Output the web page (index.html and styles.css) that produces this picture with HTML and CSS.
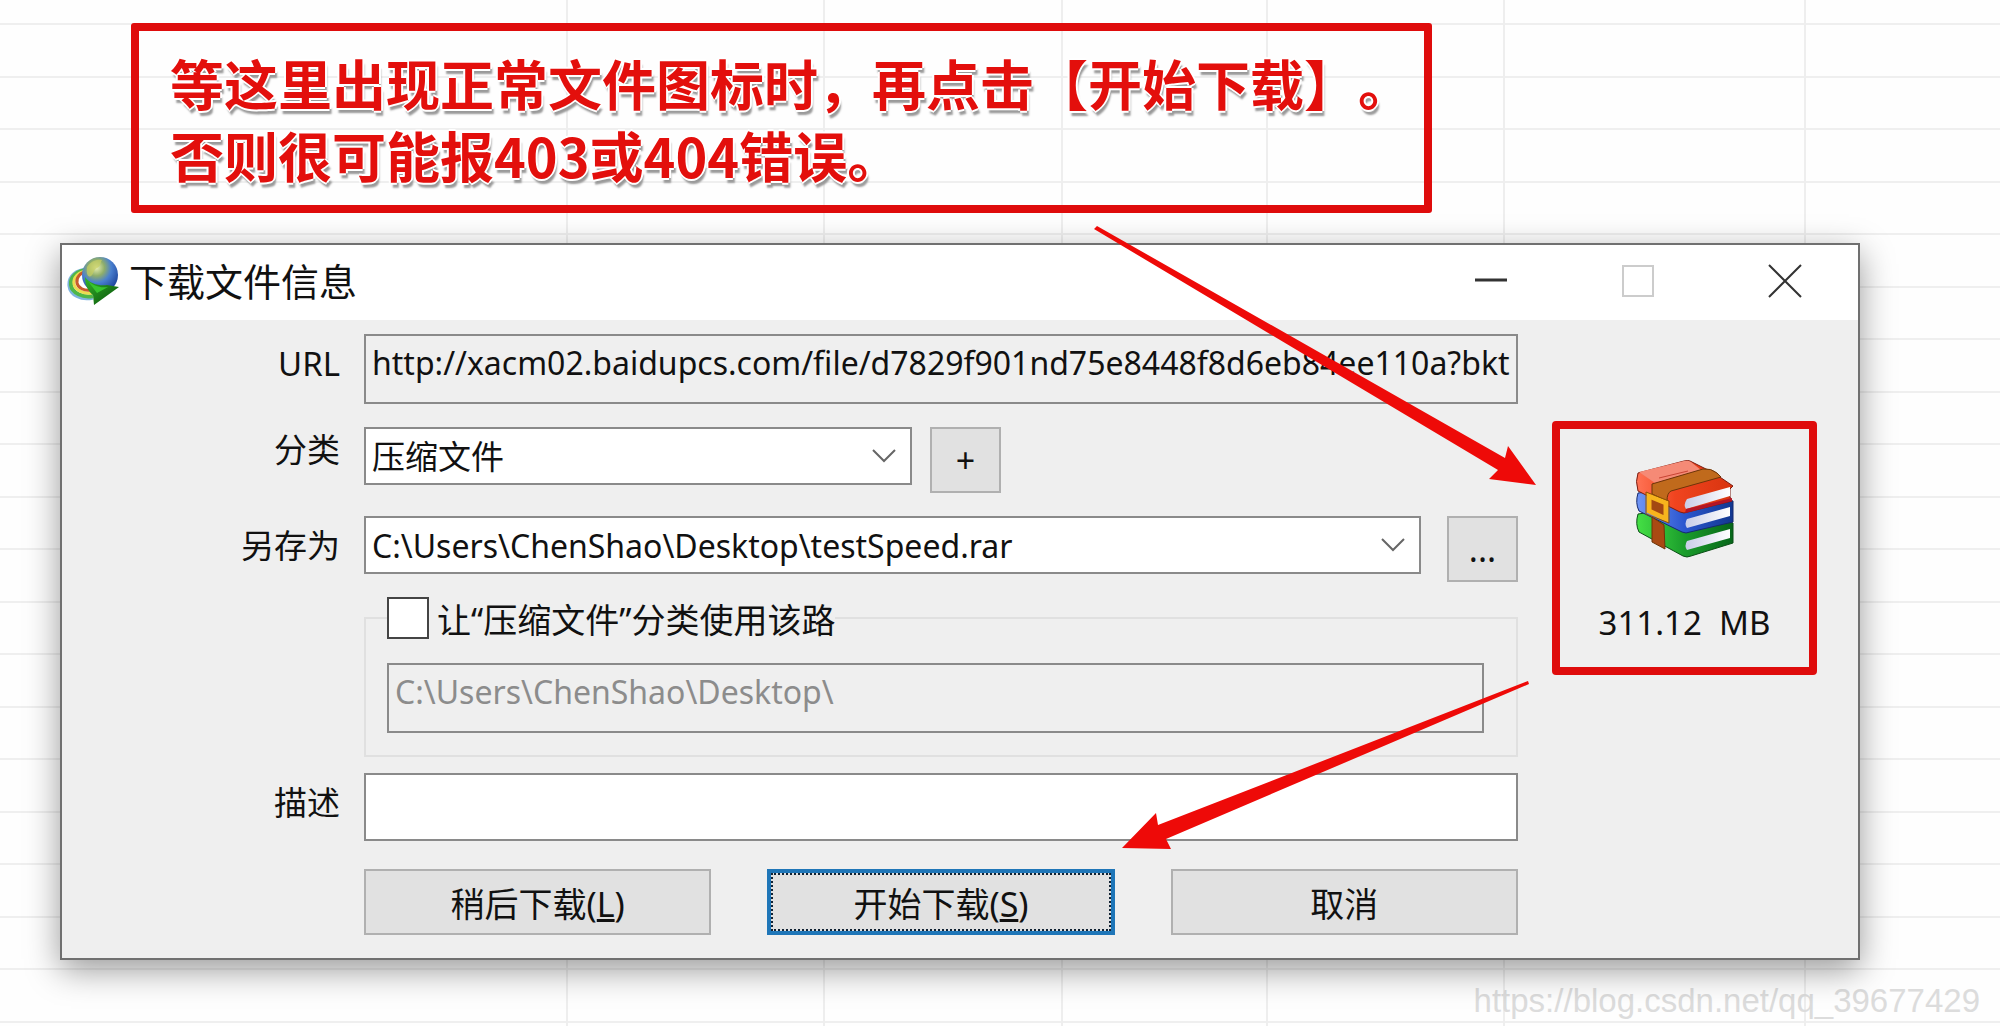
FILE: index.html
```
<!DOCTYPE html>
<html lang="zh-CN">
<head>
  <meta charset="utf-8">
  <title>下载文件信息</title>
  <link rel="stylesheet" href="styles.css">
</head>
<body>
  <p class="note">等这里出现正常文件图标时，再点击【开始下载】。<br>否则很可能报403或404错误。</p>

  <div class="dialog">
    <div class="titlebar">
      <svg class="logo" viewBox="0 0 52 48">
        <defs>
          <radialGradient id="globe" cx="0.4" cy="0.3" r="0.75">
            <stop offset="0" stop-color="#e9efb0"/>
            <stop offset="0.3" stop-color="#8fae6a"/>
            <stop offset="0.55" stop-color="#4a80cf"/>
            <stop offset="1" stop-color="#173c94"/>
          </radialGradient>
          <linearGradient id="arrow" x1="0" y1="0" x2="1" y2="1">
            <stop offset="0" stop-color="#35b52c"/>
            <stop offset="1" stop-color="#064d08"/>
          </linearGradient>
        </defs>
        <g fill="none">
          <path d="M22 12C8 12 1 20 2 29c1 9 12 15 24 12" stroke="#7fb4e0" stroke-width="3"/>
          <path d="M22 13C10 13 3 20 4 28c1 8 12 13 22 11" stroke="#4fb648" stroke-width="4"/>
          <path d="M21 14C11 14 6 21 7 27c1 6 9 10 18 9" stroke="#e9dc50" stroke-width="3"/>
          <path d="M20 15C13 15 9 21 10 26c1 5 7 8 14 7" stroke="#c65a2c" stroke-width="3"/>
        </g>
        <circle cx="33" cy="18" r="18" fill="url(#globe)"/>
        <path d="M20 10c4-6 10-8 15-7-2 3-1 6-5 8s-3 6-6 8-5-2-4-9z" fill="#c6cf62" opacity="0.7"/>
        <path d="M18 20c5 7 14 9 22 8l12 2-25 18-1-10c-5-4-8-10-8-18z" fill="url(#arrow)"/>
        <path d="M20 23c6 6 13 8 21 7l-11 6z" fill="#38c52f"/>
      </svg>
      <span class="title">下载文件信息</span>
      <div class="window-buttons">
        <button type="button" aria-label="最小化"><svg viewBox="0 0 34 34"><path d="M1 16h32" stroke="#333" stroke-width="3"/></svg></button>
        <button type="button" aria-label="最大化" disabled><svg viewBox="0 0 34 34"><path d="M2 2h30v30H2z" fill="none" stroke="#ccc" stroke-width="2"/></svg></button>
        <button type="button" aria-label="关闭"><svg viewBox="0 0 34 34"><path d="M1 1l32 32M33 1L1 33" stroke="#333" stroke-width="2"/></svg></button>
      </div>
    </div>

    <div class="content">
      <form class="form">
        <label for="url">URL</label>
        <input id="url" class="text" type="text" value="http://xacm02.baidupcs.com/file/d7829f901nd75e8448f8d6eb84ee110a?bkt" readonly>

        <label class="label-top" for="category">分类</label>
        <div class="row">
          <div class="combo combo-short">
            <select id="category"><option>压缩文件</option></select>
            <svg viewBox="0 0 24 14"><path d="M1 1l11 11L23 1"/></svg>
          </div>
          <button class="btn btn-small" type="button">+</button>
        </div>

        <label class="label-path" for="path">另存为</label>
        <div class="row row-wide">
          <div class="combo">
            <select id="path"><option>C:\Users\ChenShao\Desktop\testSpeed.rar</option></select>
            <svg viewBox="0 0 24 14"><path d="M1 1l11 11L23 1"/></svg>
          </div>
          <button class="btn btn-small" type="button">...</button>
        </div>

        <fieldset class="group">
          <legend><input id="remember" type="checkbox"><label for="remember">让“压缩文件”分类使用该路</label></legend>
          <input class="text" type="text" value="C:\Users\ChenShao\Desktop\" aria-label="默认路径" disabled>
        </fieldset>

        <label for="desc">描述</label>
        <input id="desc" class="text editable" type="text">

        <div class="actions">
          <button class="btn" type="button">稍后下载(<u>L</u>)</button>
          <button class="btn btn-default" type="button">开始下载(<u>S</u>)</button>
          <button class="btn" type="button">取消</button>
        </div>
      </form>

      <div class="side">
        <div class="file">
          <svg class="rar" viewBox="0 0 100 100">
            <defs>
              <linearGradient id="red" x1="0" x2="1"><stop offset="0" stop-color="#ff7355"/><stop offset="0.4" stop-color="#f0441f"/><stop offset="1" stop-color="#d8340f"/></linearGradient>
              <linearGradient id="blue" x1="0" x2="1"><stop offset="0" stop-color="#6f95f5"/><stop offset="0.5" stop-color="#2b56cf"/><stop offset="1" stop-color="#12378f"/></linearGradient>
              <linearGradient id="green" x1="0" x2="1"><stop offset="0" stop-color="#45e045"/><stop offset="0.5" stop-color="#1a9c2b"/><stop offset="1" stop-color="#07661a"/></linearGradient>
              <linearGradient id="pages" x1="0" x2="1"><stop offset="0" stop-color="#c9cde8"/><stop offset="1" stop-color="#fff"/></linearGradient>
            </defs>
            <!-- green book -->
            <path d="M3 55q-3 10 1 18l44 24q4 2 8 0l42-13v-20L40 50z" fill="url(#green)" stroke="#0b4f16" stroke-width="1"/>
            <path d="M52 82q-3 5 0 9l43-12V70z" fill="url(#pages)"/>
            <!-- blue book -->
            <path d="M3 34q-3 10 1 18l43 21q4 2 8 0l43-10V42L40 30z" fill="url(#blue)" stroke="#15296e" stroke-width="1"/>
            <path d="M52 60q-3 5 0 9l43-12V48z" fill="url(#pages)"/>
            <!-- red book -->
            <path d="M3 14Q0 22 3 32l42 21q4 2 8 0l44-11-2-4V30l3-3-19-13L55 2q-2-1-6 0z" fill="url(#red)" stroke="#7a1d12" stroke-width="1"/>
            <path d="M4 13L49 2q4-1 7 1l10 8-46 13z" fill="#f58a76"/>
            <path d="M24 19l29-7" stroke="#c84434" stroke-width="1"/>
            <path d="M52 40q-4 6-1 10l44-13V28z" fill="url(#pages)"/>
            <path d="M51 50l46-11v3L50 54z" fill="#b31527"/>
            <!-- belt -->
            <path d="M17 25L68 10q8-1 14 4l4 4-50 14q-4 2-4 10l-15-7z" fill="#c06a1c" stroke="#6d3509" stroke-width="1"/>
            <path d="M17 58l12 8 1 24-13-7z" fill="#a94a13" stroke="#6d3509" stroke-width="1"/>
            <path d="M14 37l17 7v16l-17-8z" fill="#a44812" stroke="#f7b51d" stroke-width="5"/>
            <path d="M11 33l23 9v22l-23-9z" fill="none" stroke="#8c5207" stroke-width="1"/>
          </svg>
          <span class="size">311.12  MB</span>
        </div>
      </div>
    </div>

    <svg class="arrows" viewBox="0 0 446 640" aria-hidden="true">
      <path d="M3 5L411 237 414 225 442 264 395 258 404 249 0 8z"/>
      <path d="M434 460L64 604 62 592 28 627 77 628 72 618 435 463z"/>
    </svg>
  </div>

  <footer class="watermark">https://blog.csdn.net/qq_39677429</footer>
</body>
</html>
```
FILE: styles.css
```
* {
  box-sizing: border-box;
}

body {
  margin: 0;
  padding-top: 23px;
  font-family: "Noto Sans", "Noto Sans CJK SC", sans-serif;
  font-size: 33px;
  color: #111;
  background-color: #fefefe;
  /* spreadsheet lines behind the dialog */
  background-image:
    linear-gradient(#eee, #eee),
    linear-gradient(#eee, #eee),
    linear-gradient(#eee, #eee),
    linear-gradient(#eee, #eee),
    linear-gradient(#eee, #eee),
    linear-gradient(#eee, #eee),
    repeating-linear-gradient(transparent 0 23px, #efefef 23px 25px, transparent 25px 76px, #efefef 76px 78px, transparent 78px 105px);
  background-size: 2px 100%, 2px 100%, 2px 100%, 2px 100%, 2px 100%, 2px 100%, 100% 100%;
  background-position: 566px 0, 823px 0, 1061px 0, 1266px 0, 1503px 0, 1804px 0, 0 0;
  background-repeat: no-repeat;
  min-height: 100vh;
  overflow: hidden;
}

button,
input,
select {
  font: inherit;
  color: inherit;
  margin: 0;
}

.note {
  margin: 0 568px 0 131px;
  padding: 16px 0 14px 31px;
  border: 8px solid #df0c0c;
  border-radius: 3px;
  font-family: "Noto Sans CJK SC", sans-serif;
  font-size: 54px;
  font-weight: bold;
  line-height: 72px;
  white-space: nowrap;
  text-spacing-trim: space-all;
  color: #e30f0c;
  text-shadow: 2px 0 #fff, -2px 0 #fff, 0 2px #fff, 0 -2px #fff, 2px 5px 2px #999;
}

.dialog {
  position: relative;
  margin: 30px 140px 0 60px;
  border: 2px solid #707070;
  background: #efefef;
  box-shadow: 0 10px 32px rgba(0, 0, 0, 0.4);
}

.titlebar {
  display: flex;
  align-items: center;
  height: 75px;
  padding: 0 0 4px 5px;
  background: #fff;
}

.logo {
  width: 52px;
  height: 48px;
  margin-right: 10px;
}

.title {
  font-size: 38px;
  line-height: 48px;
}

.window-buttons {
  display: flex;
  margin-left: auto;
}

.window-buttons button {
  display: flex;
  align-items: center;
  justify-content: center;
  width: 147px;
  height: 71px;
  padding: 0;
  border: 0;
  background: none;
}

.window-buttons svg {
  width: 34px;
  height: 34px;
}

.content {
  display: grid;
  grid-template-columns: 1fr 340px;
}

.form {
  display: grid;
  grid-template-columns: 302px 1fr;
  align-items: start;
  padding: 14px 0 23px;
}

.form > label {
  padding-right: 24px;
  text-align: right;
  line-height: 60px;
}

.form > .label-top {
  line-height: 46px;
}

.text {
  width: 100%;
  height: 70px;
  padding: 0 6px 14px;
  border: 2px solid #8a8a8a;
  border-radius: 0;
  background: #efefef;
  font-size: 32px;
}

.text:disabled {
  color: #8c8c8c;
}

.editable {
  height: 68px;
  background: #fff;
}

.row {
  display: flex;
  align-items: flex-start;
  gap: 18px;
}

.row,
.label-top,
.label-path {
  margin-top: 23px;
}

.row-wide {
  gap: 26px;
}

.combo {
  position: relative;
  flex: 1;
}

.combo-short {
  flex: 0 0 548px;
}

.combo select {
  display: block;
  width: 100%;
  height: 58px;
  padding: 0 60px 0 6px;
  border: 2px solid #8a8a8a;
  border-radius: 0;
  background: #fff;
  appearance: none;
}

.combo #path {
  font-size: 32px;
}

.combo svg {
  position: absolute;
  right: 16px;
  top: 22px;
  width: 24px;
  height: 14px;
  fill: none;
  stroke: #666;
  stroke-width: 2;
  pointer-events: none;
}

.btn {
  height: 66px;
  padding: 0;
  border: 2px solid #b0b0b0;
  background: #e1e1e1;
  font-size: 34px;
}

.btn-small {
  width: 71px;
}

.group {
  grid-column: 2;
  min-width: 0;
  margin: 15px 0 16px;
  padding: 24px 32px 22px 21px;
  border: 2px solid #e0e0e0;
}

.group legend {
  display: flex;
  align-items: center;
  gap: 8px;
  height: 42px;
  padding: 0;
  font-size: 34px;
}

.group legend input {
  width: 42px;
  height: 42px;
  border: 2px solid #444;
  background: #fff;
  appearance: none;
}

.group .text {
  display: block;
}

.actions {
  grid-column: 2;
  display: grid;
  grid-template-columns: repeat(3, 1fr);
  gap: 56px;
  margin-top: 28px;
}

.btn-default {
  border: 4px solid #1f76b8;
  outline: 2px dotted #123;
  outline-offset: -6px;
}

.side {
  padding: 101px 41px 0 34px;
}

.file {
  display: flex;
  flex-direction: column;
  align-items: center;
  padding: 30px 0 20px;
  border: 8px solid #df0c0c;
  border-radius: 4px;
}

.rar {
  width: 100px;
  height: 100px;
}

.size {
  margin-top: 40px;
  line-height: 48px;
  white-space: pre;
}

.arrows {
  position: absolute;
  top: -24px;
  right: 318px;
  width: 446px;
  height: 640px;
  fill: #ee0a08;
  pointer-events: none;
}

.watermark {
  padding: 23px 20px 0 0;
  font-family: "Liberation Sans", sans-serif;
  font-size: 33px;
  line-height: 36px;
  text-align: right;
  color: #dcdcdc;
}
```
